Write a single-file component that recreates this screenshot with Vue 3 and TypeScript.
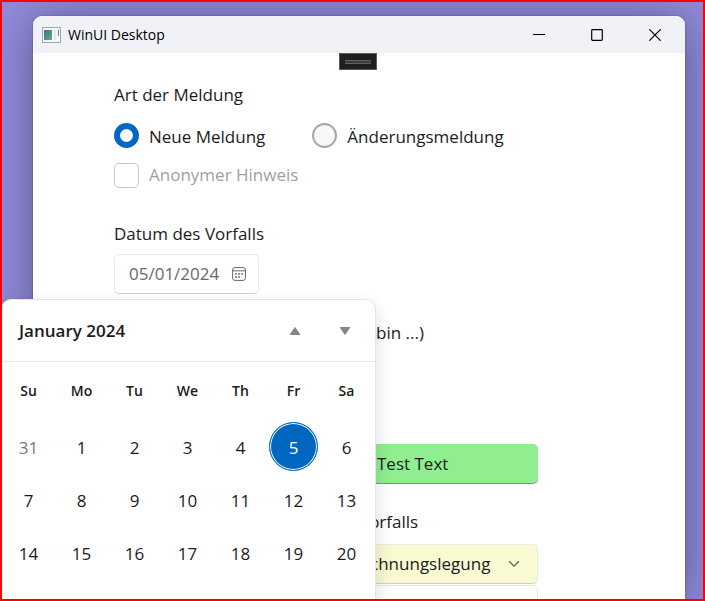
<script setup lang="ts">
import { computed, ref } from 'vue'

type Day = { key: string; label: number; outside: boolean }

const reportType = ref<'new' | 'change'>('new')
const anonymous = ref(false)
const date = ref('05/01/2024')
const note = ref('Test Text')
const category = ref('Rechnungslegung')
const details = ref('')
const selected = ref('1-5')

const weekdays = ['Su', 'Mo', 'Tu', 'We', 'Th', 'Fr', 'Sa']

const weeks = computed<Day[][]>(() =>
  [0, 1, 2].map((week) =>
    weekdays.map((_, column) => {
      const day = new Date(2023, 11, 31 + week * 7 + column)
      return {
        key: `${day.getMonth() + 1}-${day.getDate()}`,
        label: day.getDate(),
        outside: day.getMonth() !== 0,
      }
    }),
  ),
)
</script>

<template>
  <div class="desktop">
    <main class="window">
      <header class="titlebar">
        <svg class="app-icon" viewBox="0 0 19 16" aria-hidden="true">
          <defs>
            <linearGradient id="pane" x1="0" y1="0" x2="1" y2="1">
              <stop offset="0" stop-color="#3c6f9c" />
              <stop offset="1" stop-color="#58b56c" />
            </linearGradient>
          </defs>
          <rect x="0.5" y="0.5" width="18" height="15" fill="#f4f5f5" stroke="#a3a7ad" />
          <rect x="2" y="3" width="8" height="10" fill="url(#pane)" />
          <rect x="12" y="3" width="2" height="10" fill="#e5e8e8" />
          <rect x="16" y="3" width="1" height="6" fill="url(#pane)" />
        </svg>
        <h1 class="title">WinUI Desktop</h1>
        <div class="caption-buttons">
          <button type="button" aria-label="Minimize">
            <svg viewBox="0 0 12 12"><path d="M0 5.5h12" /></svg>
          </button>
          <button type="button" aria-label="Maximize">
            <svg viewBox="0 0 12 12"><rect x="0.7" y="0.7" width="10.6" height="10.6" rx="0.8" /></svg>
          </button>
          <button type="button" aria-label="Close">
            <svg viewBox="0 0 12 12"><path d="M0.3 0.3l11.4 11.4M11.7 0.3L0.3 11.7" /></svg>
          </button>
        </div>
      </header>

      <form class="form" @submit.prevent>
        <div class="grip"><span></span></div>

        <fieldset class="group">
          <legend class="label">Art der Meldung</legend>
          <div class="radios">
            <label class="choice">
              <input v-model="reportType" type="radio" name="type" value="new" />
              <span>Neue Meldung</span>
            </label>
            <label class="choice">
              <input v-model="reportType" type="radio" name="type" value="change" />
              <span>Änderungsmeldung</span>
            </label>
          </div>
          <label class="choice muted">
            <input v-model="anonymous" type="checkbox" disabled />
            <span>Anonymer Hinweis</span>
          </label>
        </fieldset>

        <div class="date-group">
          <label class="label" for="date">Datum des Vorfalls</label>
          <div class="date-box">
            <input id="date" v-model="date" type="text" />
            <button type="button" aria-label="Calendar">
              <svg viewBox="0 0 14 14">
                <rect x="0.6" y="0.6" width="12.8" height="12.8" rx="2.2" />
                <path d="M0.6 3.8h12.8" />
                <g class="dots">
                  <circle cx="4" cy="7" r="0.9" /><circle cx="7" cy="7" r="0.9" />
                  <circle cx="10" cy="7" r="0.9" /><circle cx="4" cy="10" r="0.9" />
                  <circle cx="7" cy="10" r="0.9" />
                </g>
              </svg>
            </button>
          </div>
        </div>

        <div class="side">
          <label class="label inset" for="note">bin ...)</label>
          <input id="note" v-model="note" class="text-box green" type="text" />
          <label class="label shifted" for="category">Vorfalls</label>
          <div class="select-box">
            <select id="category" v-model="category">
              <option>Rechnungslegung</option>
            </select>
            <svg viewBox="0 0 12 8" aria-hidden="true"><path d="M1 1.2l5 5 5-5" /></svg>
          </div>
          <input v-model="details" class="text-box plain" type="text" aria-labelledby="category" />
        </div>
      </form>
    </main>

    <section class="calendar">
      <div class="calendar-head">
        <button type="button" class="month">January 2024</button>
        <button type="button" class="arrow" aria-label="Previous">
          <svg viewBox="0 0 12 10"><path d="M6 1.5L10.8 8.5H1.2z" /></svg>
        </button>
        <button type="button" class="arrow" aria-label="Next">
          <svg viewBox="0 0 12 10"><path d="M6 8.5L1.2 1.5H10.8z" /></svg>
        </button>
      </div>
      <table class="days">
        <thead>
          <tr><th v-for="name in weekdays" :key="name" scope="col">{{ name }}</th></tr>
        </thead>
        <tbody>
          <tr v-for="(week, index) in weeks" :key="index">
            <td v-for="day in week" :key="day.key">
              <button
                type="button"
                :class="{ outside: day.outside, selected: day.key === selected }"
                @click="selected = day.key"
              >{{ day.label }}</button>
            </td>
          </tr>
        </tbody>
      </table>
    </section>
  </div>
</template>

<style>
body {
  margin: 0;
}
</style>

<style scoped>
.desktop {
  position: relative;
  box-sizing: border-box;
  display: flex;
  height: 100vh;
  padding: 14px 18px 0 31px;
  overflow: hidden;
  border: 2px solid #ff0000;
  background: #8f8ada;
  color: #1b1b1b;
  font-family: "Open Sans", "Noto Sans", sans-serif;
  font-size: 17px;
  line-height: 24px;
}

button,
input,
select {
  box-sizing: border-box;
  margin: 0;
  padding: 0;
  border: 0;
  background: none;
  color: inherit;
  font: inherit;
}

svg {
  display: block;
}

.window {
  flex: 1;
  min-width: 0;
  overflow: hidden;
  border-radius: 9px 9px 0 0;
  background: #ffffff;
  box-shadow: 0 4px 44px rgba(0, 0, 0, 0.36), 0 0 2px rgba(0, 0, 0, 0.4);
}

.titlebar {
  display: flex;
  align-items: center;
  height: 37px;
  padding: 0 1px 0 9px;
  background: #f0f2f8;
  color: #000000;
}

.app-icon {
  width: 19px;
  height: 16px;
}

.title {
  margin: 0 auto 0 7px;
  font-size: 14px;
  font-weight: 400;
}

.caption-buttons {
  display: flex;
}

.caption-buttons button {
  display: grid;
  place-items: center;
  width: 58px;
  height: 35px;
}

.caption-buttons svg {
  width: 12px;
  height: 12px;
  fill: none;
  stroke: #000000;
  stroke-width: 1.2;
}

.form {
  position: relative;
  padding: 30px 147px 0 81px;
}

.grip {
  position: absolute;
  top: 0;
  left: 50%;
  box-sizing: border-box;
  width: 38px;
  height: 17px;
  margin-left: -20px;
  padding: 6px 5px;
  border: 1px solid #5a5a5a;
  background: #1f1f1f;
}

.grip span {
  display: block;
  box-sizing: border-box;
  height: 4px;
  border: solid #606060;
  border-width: 1px 0;
  background: #3c3c3c;
}

.group {
  min-width: 0;
  margin: 0;
  padding: 0;
  border: 0;
}

.label {
  display: block;
  padding: 0;
  white-space: nowrap;
}

.radios {
  display: flex;
  gap: 47px;
  margin: 15px 0 14px;
}

.choice {
  display: flex;
  align-items: center;
  gap: 10px;
  height: 26px;
  white-space: nowrap;
}

.radios span {
  padding-top: 3px;
}

.choice input {
  flex: none;
  width: 25px;
  height: 25px;
  appearance: none;
  border: 2px solid #a6a6a6;
  border-radius: 50%;
  background: #f8f8f8;
}

.choice input:checked {
  border: 6px solid #0067c0;
  background: #ffffff;
}

.choice input[type="checkbox"] {
  border: 1px solid #c4c4c4;
  border-radius: 5px;
  background: #ffffff;
}

.muted {
  color: #a0a0a0;
}

.date-group {
  margin-top: 34px;
}

.date-box {
  display: flex;
  box-sizing: border-box;
  width: 145px;
  height: 40px;
  margin-top: 8px;
  padding: 0 12px 0 14px;
  border: 1px solid #e8e8e8;
  border-bottom-color: #d0d0d0;
  border-radius: 5px;
  color: #686868;
}

.date-box input {
  flex: 1;
  min-width: 0;
}

.date-box svg {
  width: 14px;
  height: 14px;
  fill: none;
  stroke: #666666;
}

.date-box .dots {
  fill: #666666;
  stroke: none;
}

.side {
  width: 198px;
  margin: 27px 0 0 auto;
}

.inset {
  padding-left: 36px;
}

.shifted {
  margin-top: 26px;
  padding-left: 19px;
}

.text-box {
  display: block;
  width: 100%;
  height: 40px;
  border-radius: 5px;
}

.green {
  margin-top: 99px;
  padding-left: 37px;
  border-bottom: 1px solid #8a8a8a;
  background: #90ee90;
}

.plain {
  margin-top: 1px;
  border: 1px solid #e5e5e5;
}

.select-box {
  display: grid;
  align-items: center;
  margin-top: 10px;
}

.select-box select,
.select-box svg {
  grid-area: 1 / 1;
}

.select-box select {
  width: 100%;
  height: 40px;
  padding-left: 9px;
  appearance: none;
  border: 1px solid #ebebe0;
  border-bottom-color: #cfcfc4;
  border-radius: 5px;
  background: #f9fad2;
}

.select-box svg {
  justify-self: end;
  width: 12px;
  height: 8px;
  margin-right: 18px;
  fill: none;
  stroke: #5f5f55;
  stroke-width: 1.3;
  pointer-events: none;
}

.calendar {
  position: absolute;
  top: 297px;
  bottom: -20px;
  left: -1px;
  width: 375px;
  box-sizing: border-box;
  border: 1px solid #e4e4e4;
  border-radius: 10px;
  background: #ffffff;
  box-shadow: 0 8px 18px rgba(0, 0, 0, 0.14);
}

.calendar-head {
  display: flex;
  align-items: center;
  height: 62px;
  box-sizing: border-box;
  padding: 0 5px 0 17px;
  border-bottom: 1px solid #e8e8e8;
}

.month {
  margin-right: auto;
  font-weight: 600;
}

.arrow {
  display: grid;
  place-items: center;
  width: 50px;
  height: 40px;
}

.arrow svg {
  width: 12px;
  height: 10px;
  fill: #868686;
  stroke: #868686;
  stroke-linejoin: round;
}

.days {
  width: 371px;
  table-layout: fixed;
  border-collapse: collapse;
}

.days th,
.days td {
  height: 53px;
  padding: 0;
  text-align: center;
}

.days th {
  height: 58px;
  font-size: 14px;
  font-weight: 600;
}

.days button {
  display: block;
  width: 49px;
  height: 49px;
  margin: 0 auto;
  padding-top: 2px;
  border-radius: 50%;
}

.days .outside {
  color: #777777;
}

.days .selected {
  border: 1px solid #0067c0;
  background: #0067c0;
  box-shadow: inset 0 0 0 1px #ffffff;
  color: #ffffff;
}
</style>
